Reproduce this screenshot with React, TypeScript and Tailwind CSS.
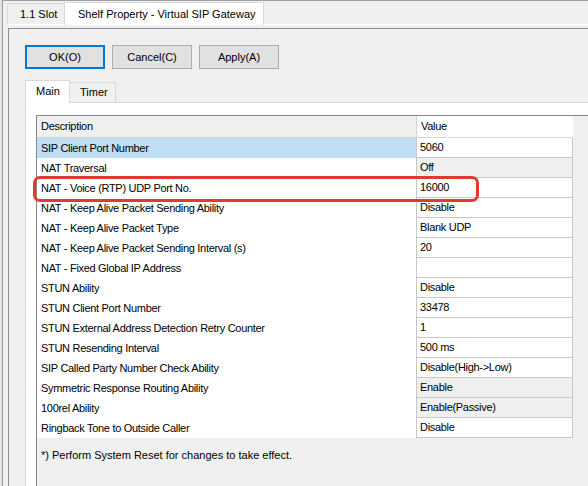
import React from 'react'

interface PropertyRow {
  label: string
  value: string
  readOnly?: boolean
}

const ROWS: PropertyRow[] = [
  { label: 'SIP Client Port Number', value: '5060' },
  { label: 'NAT Traversal', value: 'Off', readOnly: true },
  { label: 'NAT - Voice (RTP) UDP Port No.', value: '16000' },
  { label: 'NAT - Keep Alive Packet Sending Ability', value: 'Disable' },
  { label: 'NAT - Keep Alive Packet Type', value: 'Blank UDP' },
  { label: 'NAT - Keep Alive Packet Sending Interval (s)', value: '20' },
  { label: 'NAT - Fixed Global IP Address', value: '' },
  { label: 'STUN Ability', value: 'Disable' },
  { label: 'STUN Client Port Number', value: '33478' },
  { label: 'STUN External Address Detection Retry Counter', value: '1' },
  { label: 'STUN Resending Interval', value: '500 ms' },
  { label: 'SIP Called Party Number Check Ability', value: 'Disable(High->Low)' },
  { label: 'Symmetric Response Routing Ability', value: 'Enable', readOnly: true },
  { label: '100rel Ability', value: 'Enable(Passive)', readOnly: true },
  { label: 'Ringback Tone to Outside Caller', value: 'Disable' }
]

export default function App() {
  const selected = 0

  return (
    <div className="relative flex h-[486px] w-[588px] overflow-hidden bg-[#f0f0f0] font-['Liberation_Sans',Arial,sans-serif] text-[11px] text-black">
      <div className="w-[2px] shrink-0 bg-[#e3e3e3]" />
      <div className="flex min-w-0 flex-1 flex-col border-l border-[#9a9a9a]">
        {/* Outer tabs */}
        <div className="flex h-[25px] shrink-0 items-end border-t border-[#a0a0a0] pl-[4px]">
          <div className="flex h-[22px] w-[57px] items-center border-l border-t border-b border-[#d9d9d9] border-b-white pl-[12px]">
            1.1 Slot
          </div>
          <div className="flex h-[23px] w-[200px] items-center border-l border-r border-t border-[#d9d9d9] bg-white pl-[13px]">
            Shelf Property - Virtual SIP Gateway
          </div>
          <div className="flex-1 self-stretch border-b border-white" />
        </div>

        {/* Panel */}
        <div className="ml-[5px] mt-[3px] flex min-h-0 flex-1 flex-col border-l border-t border-[#898e96] pl-[16px] pt-[16px]">
          <div className="flex gap-[7px]">
            <button className="h-[24px] w-[80px] border-2 border-[#0078d7] bg-[#e1e1e1]">OK(O)</button>
            <button className="h-[24px] w-[80px] border border-[#adadad] bg-[#e1e1e1]">Cancel(C)</button>
            <button className="h-[24px] w-[80px] border border-[#adadad] bg-[#e1e1e1]">Apply(A)</button>
          </div>

          {/* Inner tabs */}
          <div className="mt-[11px] flex items-end">
            <div className="relative z-10 -mb-px flex h-[23px] w-[45px] items-center border-l border-r border-t border-[#d9d9d9] bg-white pb-px pl-[10px]">
              Main
            </div>
            <div className="flex h-[20px] w-[46px] items-center border-r border-t border-[#d9d9d9] bg-[#f0f0f0] pl-[10px]">
              Timer
            </div>
          </div>

          {/* Tab page */}
          <div className="flex min-h-0 flex-1 flex-col border-l border-t border-[#d9d9d9] bg-white pl-[10px] pt-[12px]">
            <div className="flex w-[600px] flex-1 flex-col border-l border-t border-[#828790] bg-[#f0f0f0]">
              {/* Header */}
              <div className="flex h-[22px] shrink-0">
                <div className="flex w-[379px] items-center border-b border-[#d5d5d5] bg-[#f0f0f0] pl-[4px] tracking-[-0.3px]">
                  Description
                </div>
                <div className="flex w-[157px] items-center border-b border-l border-[#d5d5d5] bg-white pl-[4px] tracking-[-0.3px]">
                  Value
                </div>
              </div>

              {/* Rows */}
              {ROWS.map((row, i) => (
                <div key={row.label} className="flex h-[20px] shrink-0">
                  <div
                    className={`flex w-[379px] items-center pl-[4px] tracking-[-0.3px] ${
                      i === selected ? 'bg-[#bfddf3]' : 'bg-white'
                    }`}
                  >
                    {row.label}
                  </div>
                  <div
                    className={`flex w-[157px] items-center border-b border-l border-r border-[#c8c8c8] pl-[3px] tracking-[-0.3px] ${
                      row.readOnly ? 'bg-[#f0f0f0]' : 'bg-white'
                    }`}
                  >
                    {row.value}
                  </div>
                </div>
              ))}

              {/* Footer note */}
              <div className="pl-[4px] pt-[9px]">*) Perform System Reset for changes to take effect.</div>
            </div>
          </div>
        </div>
      </div>

      {/* Annotation highlight */}
      <div className="absolute left-[33px] top-[176px] h-[26px] w-[446px] rounded-[7px] border-[3px] border-[#e23a2f]" />
    </div>
  )
}
